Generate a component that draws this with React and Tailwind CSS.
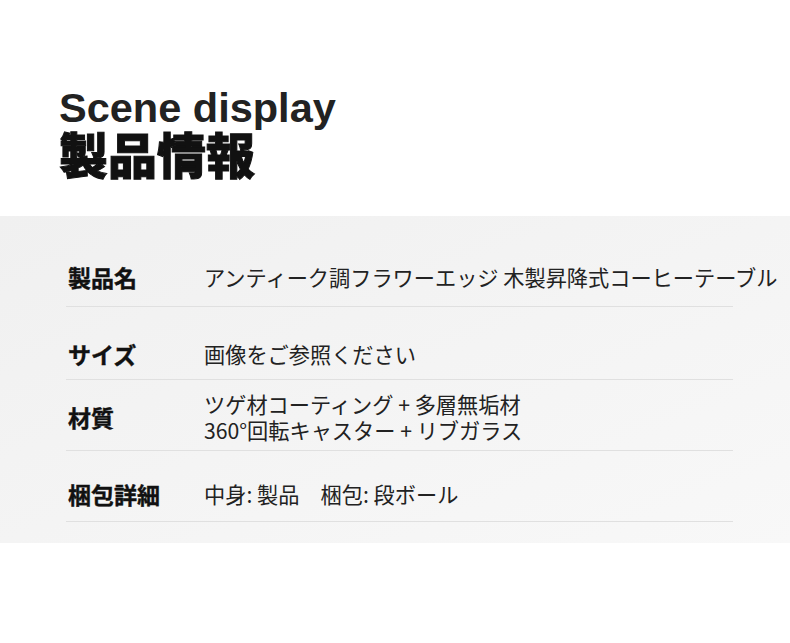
export default function App() {
  const cjk = { fontFamily: '"Noto Sans CJK JP", "Noto Sans", sans-serif' };
  return (
    <div className="w-[790px] h-[643px] bg-white overflow-hidden relative">
      <div className="h-[216px] pl-[59px] pt-[87px]">
        <div
          className="text-[41.5px] leading-[41px] font-bold text-[#222]"
          style={{ fontFamily: '"Liberation Sans", Arial, sans-serif' }}
        >
          Scene display
        </div>
        <div className="text-[49px] leading-[49px] font-black text-[#111] [-webkit-text-stroke:1px_#111]" style={cjk}>
          製品情報
        </div>
      </div>
      <div className="h-[327px] bg-gradient-to-br from-[#f0f0f0] via-[#f4f4f4] to-[#f8f8f8]">
        <div className="ml-[66px] w-[667px]" style={cjk}>
          <Row label="製品名" pt="pt-[46px]" pb="pb-[14px]">
            <div className="whitespace-nowrap">アンティーク調フラワーエッジ 木製昇降式コーヒーテーブル</div>
          </Row>
          <Row label="サイズ" pt="pt-[32px]" pb="pb-[10px]">
            <div>画像をご参照ください</div>
          </Row>
          <Row label="材質" pt="pt-[11px]" pb="pb-[7px]">
            <div className="leading-[26px]">
              <div>ツゲ材コーティング + 多層無垢材</div>
              <div>360°回転キャスター + リブガラス</div>
            </div>
          </Row>
          <Row label="梱包詳細" pt="pt-[28px]" pb="pb-[12px]">
            <div className="whitespace-pre">中身: 製品　梱包: 段ボール</div>
          </Row>
        </div>
      </div>
    </div>
  );
}

function Row({ label, children, pt, pb }) {
  return (
    <div className={`border-b border-[#e0e0e0] ${pt} ${pb}`}>
      <div className="flex items-center">
        <div className="w-[138px] shrink-0 pl-[2px] text-[23px] leading-[30px] font-bold text-[#111] [-webkit-text-stroke:0.4px_#111]">
          {label}
        </div>
        <div className="text-[21.2px] leading-[30px] text-[#222]">{children}</div>
      </div>
    </div>
  );
}
